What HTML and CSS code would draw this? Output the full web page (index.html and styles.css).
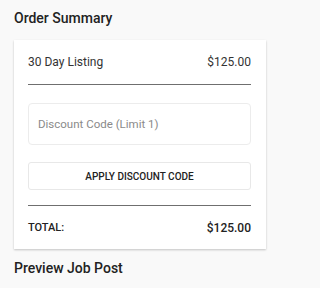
FILE: index.html
```html
<!DOCTYPE html>
<html>
<head>
<meta charset="utf-8">
<link rel="stylesheet" href="styles.css">
</head>
<body>
<div class="page">
  <h2 class="heading">Order Summary</h2>
  <div class="card">
    <div class="row item">
      <span>30 Day Listing</span>
      <span>$125.00</span>
    </div>
    <input class="code" type="text" placeholder="Discount Code (Limit 1)">
    <button class="apply">APPLY DISCOUNT CODE</button>
    <div class="row total">
      <span class="label">TOTAL:</span>
      <span class="amount">$125.00</span>
    </div>
  </div>
  <h2 class="heading next">Preview Job Post</h2>
</div>
</body>
</html>
```

FILE: styles.css
```css
html, body {
  margin: 0;
  padding: 0;
  background: #f9f9f9;
  font-family: Roboto, "Liberation Sans", Arial, sans-serif;
  color: #222;
}
.page {
  width: 252px;
  padding: 8px 0 0 14px;
}
.heading {
  margin: 0 0 12px 0;
  font-size: 14px;
  font-weight: 500;
  line-height: 20px;
  color: #222;
}
.heading.next {
  margin: 9px 0 0 0;
}
.card {
  background: #fff;
  box-shadow: 0 1px 2px rgba(0,0,0,0.22);
  padding: 14px 15px 13px 14px;
  display: flex;
  flex-direction: column;
}
.row {
  display: flex;
  justify-content: space-between;
  align-items: center;
  line-height: 16px;
  font-size: 12px;
  color: #333;
}
.item {
  padding-bottom: 14px;
  border-bottom: 1px solid #6f6f6f;
}
.code {
  margin-top: 18px;
  height: 42px;
  box-sizing: border-box;
  border: 1px solid #ececec;
  border-radius: 4px;
  padding: 0 9px;
  font-family: inherit;
  font-size: 11.5px;
  color: #333;
  outline: none;
}
.code::placeholder {
  color: #8a8a8a;
}
.apply {
  margin-top: 17px;
  height: 28px;
  box-sizing: border-box;
  background: #fff;
  border: 1px solid #e8e8e8;
  border-radius: 3px;
  font-family: inherit;
  font-size: 10px;
  font-weight: 500;
  color: #222;
  padding: 0;
}
.total {
  margin-top: 15px;
  border-top: 1px solid #6f6f6f;
  padding-top: 14px;
  font-weight: 500;
  color: #222;
}
.total .label {
  font-size: 11px;
}
.total .amount {
  font-size: 12px;
}
```
